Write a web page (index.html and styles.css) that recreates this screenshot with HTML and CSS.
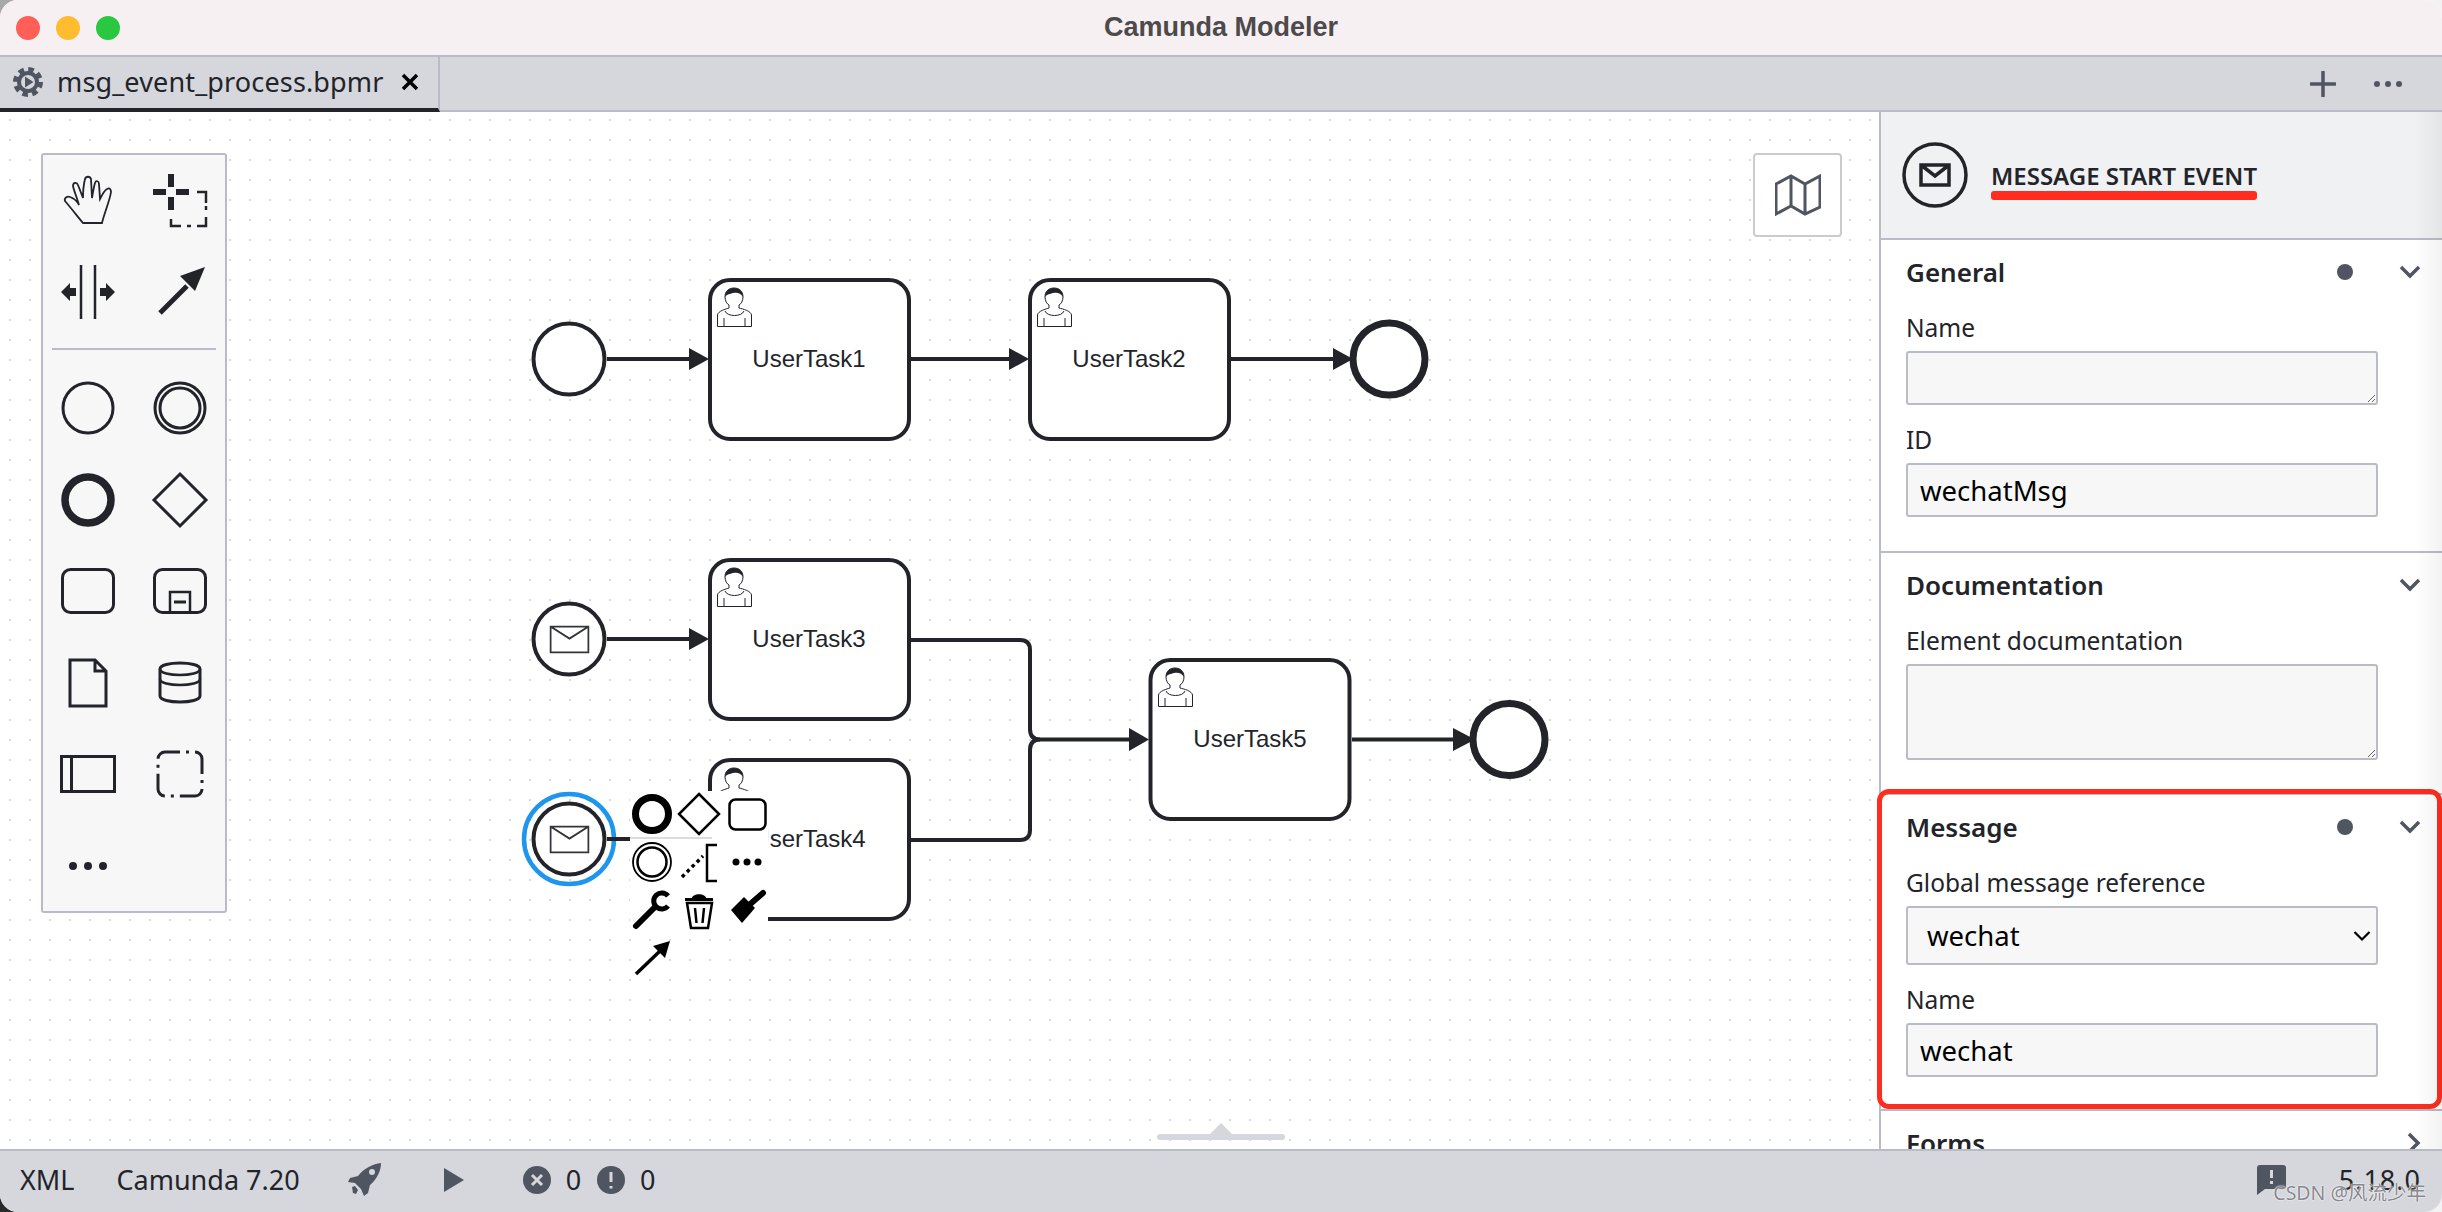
FILE: index.html
```html
<!DOCTYPE html>
<html lang="en">
<head>
  <meta charset="UTF-8">
  <title>Camunda Modeler</title>
  <link rel="stylesheet" href="styles.css">
</head>
<body>
  <!-- shared glyphs -->
  <svg class="defs" width="0" height="0">
    <symbol id="user" viewBox="0 0 35 40">
      <path class="thin" d="M8 10C8 4 12 1 17 1S26 4 26 10C26 14 24 17 22 18V21C26 22 34 24 34.500 28V39.500H.5V28C1 24 9 22 12 21V18C10 17 8 14 8 10Z"/>
      <path class="ink" d="M8 10C8 4 12 1 17 1S26 4 26 10C24 6 20 5 16 6C13 7 10 7 8 10Z"/>
      <path class="thin" d="M8 24C10 30 25 30 27 24M7 31V39.500M28 31V39.500"/>
    </symbol>
    <symbol id="mail" viewBox="0 0 40 28">
      <path class="env" d="M1 1H39V27H1ZM1 1L20 13L39 1"/>
    </symbol>
  </svg>

  <div class="window">
    <header class="titlebar">
      <div class="lights">
        <span class="light red"></span>
        <span class="light amber"></span>
        <span class="light green"></span>
      </div>
      <span class="app-title">Camunda Modeler</span>
    </header>

    <nav class="tabs">
      <div class="tab">
        <svg class="tab-gear" width="30" height="30" viewBox="0 0 30 30">
          <circle class="gear-teeth" cx="15" cy="15" r="12.500"/>
          <circle class="gear-ring" cx="15" cy="15" r="9"/>
          <path class="gear-play" d="M12 9.500L20.500 15L12 20.500Z"/>
        </svg>
        <span class="tab-name">msg_event_process.bpmr</span>
        <svg class="tab-close" width="18" height="18" viewBox="0 0 18 18">
          <path d="M2 2L16 16M16 2L2 16"/>
        </svg>
      </div>
      <div class="tab-actions">
        <svg width="26" height="26" viewBox="0 0 26 26"><path class="plus" d="M13 1V25M1 13H25"/></svg>
        <svg width="30" height="8" viewBox="0 0 30 8">
          <circle class="slate" cx="4" cy="4" r="3"/>
          <circle class="slate" cx="15" cy="4" r="3"/>
          <circle class="slate" cx="26" cy="4" r="3"/>
        </svg>
      </div>
    </nav>

    <main class="workspace">
      <section class="canvas">
        <svg class="diagram" width="1879" height="1037" viewBox="0 112 1879 1037">
          <!-- top row -->
          <circle class="shape" cx="569" cy="359" r="35.500"/>
          <path class="flow" d="M607 359H692"/>
          <path class="ink" d="M689 348L709 359L689 370Z"/>
          <rect class="shape" x="710" y="280" width="199" height="159" rx="20"/>
          <use href="#user" x="717" y="287" width="35" height="40"/>
          <text class="task-label" x="809" y="367">UserTask1</text>
          <path class="flow" d="M911 359H1012"/>
          <path class="ink" d="M1009 348L1029 359L1009 370Z"/>
          <rect class="shape" x="1030" y="280" width="199" height="159" rx="20"/>
          <use href="#user" x="1037" y="287" width="35" height="40"/>
          <text class="task-label" x="1129" y="367">UserTask2</text>
          <path class="flow" d="M1231 359H1336"/>
          <path class="ink" d="M1333 348L1353 359L1333 370Z"/>
          <circle class="end" cx="1389" cy="359" r="36"/>

          <!-- message row -->
          <circle class="shape" cx="569" cy="639" r="35.500"/>
          <use href="#mail" x="549.500" y="625.500" width="40" height="28"/>
          <path class="flow" d="M607 639H692"/>
          <path class="ink" d="M689 628L709 639L689 650Z"/>
          <rect class="shape" x="710" y="560" width="199" height="159" rx="20"/>
          <use href="#user" x="717" y="567" width="35" height="40"/>
          <text class="task-label" x="809" y="647">UserTask3</text>

          <!-- merge -->
          <path class="flow" d="M911 640H1020Q1030 640 1030 650V729Q1030 739.500 1040 739.500H1132"/>
          <path class="flow" d="M911 840H1020Q1030 840 1030 830V750Q1030 739.500 1040 739.500"/>
          <path class="ink" d="M1129 728L1149 739.500L1129 751Z"/>
          <rect class="shape" x="1150.500" y="660" width="199" height="159" rx="20"/>
          <use href="#user" x="1158" y="667" width="35" height="40"/>
          <text class="task-label" x="1250" y="747">UserTask5</text>
          <path class="flow" d="M1352 739.500H1456"/>
          <path class="ink" d="M1453 728L1475 739.500L1453 751Z"/>
          <circle class="end" cx="1509" cy="739.500" r="36"/>

          <!-- selected message start -->
          <rect class="shape" x="710" y="760" width="199" height="159" rx="20"/>
          <use href="#user" x="717" y="767" width="35" height="40"/>
          <text class="task-label" x="809" y="847">UserTask4</text>
          <circle class="selection" cx="569" cy="839" r="45"/>
          <circle class="shape" cx="569" cy="839" r="35.500"/>
          <use href="#mail" x="549.500" y="825.500" width="40" height="28"/>
          <path class="flow" d="M607 839H630"/>

          <!-- context pad -->
          <rect class="pad-bg" x="630" y="791" width="138" height="139"/>
          <path class="ghost" d="M630 838H712"/>
          <circle class="pad-thick" cx="652" cy="814" r="16.500"/>
          <path class="pad-line" d="M699 794L719 814L699 834L679 814Z"/>
          <rect class="pad-line" x="729.500" y="799.500" width="36" height="30" rx="6"/>
          <circle class="pad-thin" cx="652" cy="862" r="19"/>
          <circle class="pad-line" cx="652" cy="862" r="14.500"/>
          <path class="pad-dotted" d="M682 877L703 856"/>
          <path class="pad-line" d="M717 845H707V881H717"/>
          <circle class="pad-fill" cx="736" cy="862" r="3.500"/>
          <circle class="pad-fill" cx="747" cy="862" r="3.500"/>
          <circle class="pad-fill" cx="758" cy="862" r="3.500"/>
          <path class="pad-wrench" d="M636 926L655 907"/>
          <path class="pad-wrench-head" d="M668 896A8 8 0 1 0 668 906"/>
          <path class="pad-fill" d="M692 898C693 893 705 893 706 898H713V901H685V898Z"/>
          <path class="pad-line" d="M687 903H712L708 928H691ZM695 908L696.500 923M704 908L702.500 923"/>
          <path class="pad-fill" d="M731 910L744 897L755 908L742 923Z"/>
          <path class="pad-brush" d="M748 906L763 893"/>
          <path class="pad-arrow" d="M636 974L660 951"/>
          <path class="pad-fill" d="M670 941L653 946L665 958Z"/>
        </svg>

        <div class="palette">
          <div class="tool-grid">
            <svg class="tool" viewBox="0 0 60 60"><path class="t-hand" d="M25 53C20 47 13 38 7 31C6 28 9 26 12 27C15 28 19 31 21 35C19 28 16 21 15 16C15 12 19 12 20 15L25 28C25 20 26 13 27 9C28 6 32 6 33 9L34 28C35 22 36 16 37 13C38 10 41 11 41 14L42 29C44 25 47 20 49 19C52 17 53 20 53 22C52 30 46 44 44 53Z"/></svg>
            <svg class="tool" viewBox="0 0 60 60">
              <path class="ink" d="M18 4H24V17H18ZM18 27H24V40H18ZM3 19H16V25H3ZM26 19H39V25H26Z"/>
              <path class="t-thin" d="M47 22H56V33M56 36V40M56 47V56H47M37 56H41M21 49V56H31"/>
            </svg>
            <svg class="tool" viewBox="0 0 60 60">
              <path class="t-thin" d="M23 3V57M37 3V57"/>
              <path class="ink" d="M3 30L12 21V26H18V34H12V39ZM57 30L48 21V26H42V34H48V39Z"/>
            </svg>
            <svg class="tool" viewBox="0 0 60 60">
              <path class="t-bold" d="M10 51L37 24"/>
              <path class="ink" d="M55 5L30 14L45 29Z"/>
            </svg>
          </div>
          <div class="palette-sep"></div>
          <div class="tool-grid tight">
            <svg class="tool" viewBox="0 0 60 60"><circle class="t-line" cx="30" cy="30" r="25"/></svg>
            <svg class="tool" viewBox="0 0 60 60"><circle class="t-line" cx="30" cy="30" r="25"/><circle class="t-line" cx="30" cy="30" r="20"/></svg>
            <svg class="tool" viewBox="0 0 60 60"><circle class="t-thick" cx="30" cy="30" r="23"/></svg>
            <svg class="tool" viewBox="0 0 60 60"><path class="t-line" d="M30 4L56 30L30 56L4 30Z"/></svg>
            <svg class="tool" viewBox="0 0 60 60"><rect class="t-line" x="4.500" y="8.500" width="51" height="43" rx="8"/></svg>
            <svg class="tool" viewBox="0 0 60 60">
              <rect class="t-line" x="4.500" y="8.500" width="51" height="43" rx="8"/>
              <path class="t-thin" d="M20 51V31H40V51"/>
              <path class="t-line" d="M24 41H36"/>
            </svg>
            <svg class="tool" viewBox="0 0 60 60"><path class="t-line" d="M12 7H37L48 18V53H12ZM37 7V18H48"/></svg>
            <svg class="tool" viewBox="0 0 60 60">
              <path class="t-line" d="M10 16C10 8 50 8 50 16V43C50 51 10 51 10 43Z"/>
              <path class="t-thin" d="M10 16C10 24 50 24 50 16M10 26C10 34 50 34 50 26"/>
            </svg>
            <svg class="tool" viewBox="0 0 60 60"><path class="t-line" d="M3.500 12.500H56.500V47.500H3.500ZM13.500 12.500V47.500"/></svg>
            <svg class="tool" viewBox="0 0 60 60"><rect class="t-group" x="8" y="8" width="44" height="44" rx="7"/></svg>
            <svg class="tool" viewBox="0 0 60 60">
              <circle class="ink" cx="15" cy="30" r="4"/>
              <circle class="ink" cx="30" cy="30" r="4"/>
              <circle class="ink" cx="45" cy="30" r="4"/>
            </svg>
          </div>
        </div>

        <button class="minimap-btn">
          <svg width="46" height="42" viewBox="0 0 46 42"><path class="slate-line" d="M1 10L16 2L30 10L45 2V33L30 40L16 32L1 40ZM16 2V32M30 10V40"/></svg>
        </button>

        <div class="drawer-handle"></div>
      </section>

      <aside class="panel">
        <div class="panel-head">
          <svg class="head-icon" width="66" height="66" viewBox="0 0 66 66">
            <circle class="head-ring" cx="33" cy="33" r="31"/>
            <path class="head-mail" d="M19 23H47V43H19ZM19 23L33 34L47 23"/>
          </svg>
          <div class="head-title">
            <span>MESSAGE START EVENT</span>
            <i class="red-underline"></i>
          </div>
        </div>

        <section class="group">
          <div class="group-head">
            <h3>General</h3>
            <span class="group-dot"></span>
            <svg class="chev" width="22" height="14" viewBox="0 0 22 14"><path d="M2 2L11 11L20 2"/></svg>
          </div>
          <div class="field">
            <label>Name</label>
            <textarea class="short"></textarea>
          </div>
          <div class="field">
            <label>ID</label>
            <input type="text" value="wechatMsg">
          </div>
        </section>

        <section class="group docs">
          <div class="group-head">
            <h3>Documentation</h3>
            <svg class="chev" width="22" height="14" viewBox="0 0 22 14"><path d="M2 2L11 11L20 2"/></svg>
          </div>
          <div class="field">
            <label>Element documentation</label>
            <textarea class="tall"></textarea>
          </div>
        </section>

        <section class="group message">
          <div class="group-head">
            <h3>Message</h3>
            <span class="group-dot"></span>
            <svg class="chev" width="22" height="14" viewBox="0 0 22 14"><path d="M2 2L11 11L20 2"/></svg>
          </div>
          <div class="field">
            <label>Global message reference</label>
            <div class="select-wrap">
              <select><option>wechat</option></select>
              <svg class="select-arrow" width="18" height="12" viewBox="0 0 18 12"><path d="M1.500 2L9 9.500L16.500 2"/></svg>
            </div>
          </div>
          <div class="field">
            <label>Name</label>
            <input type="text" value="wechat">
          </div>
        </section>

        <section class="group">
          <div class="group-head">
            <h3 class="plain">Forms</h3>
            <svg class="chev" width="14" height="22" viewBox="0 0 14 22"><path d="M2 2L11 11L2 20"/></svg>
          </div>
        </section>
      </aside>

      <div class="red-box"></div>
      <div class="edge-shade"></div>
    </main>

    <footer class="statusbar">
      <span class="st-xml">XML</span>
      <span class="st-engine">Camunda 7.20</span>
      <svg class="st-rocket" width="33" height="33" viewBox="0 0 33 33">
        <path class="slate" d="M33 0C25 1 16 5 10 13L2 15L0 19L7 20L13 26L16 33L20 30L22 22C29 16 33 8 33 0Z"/>
        <path class="slate" d="M4 24L7 23L10 27L8 31L5 30Z"/>
        <circle class="st-window" cx="24" cy="9" r="3"/>
      </svg>
      <svg class="st-play" width="22" height="26" viewBox="0 0 22 26"><path class="slate" d="M1 1L21 13L1 25Z"/></svg>
      <svg class="st-badge" width="28" height="28" viewBox="0 0 28 28">
        <circle class="slate" cx="14" cy="14" r="14"/>
        <path class="st-mark" d="M9 9L19 19M19 9L9 19"/>
      </svg>
      <span class="st-count">0</span>
      <svg class="st-badge" width="28" height="28" viewBox="0 0 28 28">
        <circle class="slate" cx="14" cy="14" r="14"/>
        <path class="st-mark" d="M14 6V16M14 20V22.500"/>
      </svg>
      <span class="st-count">0</span>
      <span class="st-spacer"></span>
      <svg class="st-feedback" width="29" height="30" viewBox="0 0 29 30">
        <path class="slate" d="M3 0H26Q29 0 29 3V21Q29 24 26 24H8L0 30V3Q0 0 3 0Z"/>
        <path class="st-mark" d="M14.500 5V13M14.500 16V19"/>
      </svg>
      <span class="st-version">5.18.0</span>
      <span class="watermark">CSDN @风流少年</span>
    </footer>
  </div>
</body>
</html>
```

FILE: styles.css
```css
/* Tokens */
:root {
  --ink: #22242a;
  --slate: #505562;
  --line: #b9bcc6;
  --bar: #d5d7dc;
  --field: #f7f7f8;
  --red: #ff2d1f;
}

* {
  box-sizing: border-box;
}

html,
body {
  margin: 0;
  height: 100%;
}

body {
  overflow: hidden;
  font-family: "Noto Sans", sans-serif;
  color: var(--ink);
  background:
    linear-gradient(#a8a8a8, #a8a8a8) left top / 50% 50% no-repeat,
    linear-gradient(#2a2a2a, #2a2a2a) left bottom / 50% 50% no-repeat,
    #f2f2f2;
}

.defs {
  position: absolute;
}

.window {
  display: flex;
  flex-direction: column;
  height: 1212px;
  border-radius: 18px;
  overflow: hidden;
  background: #fff;
}

/* Title bar */
.titlebar {
  display: flex;
  align-items: center;
  justify-content: center;
  position: relative;
  flex: 0 0 57px;
  background: #f7f0f3;
  border-bottom: 2px solid var(--line);
}

.lights {
  position: absolute;
  left: 16px;
  top: 16px;
  display: flex;
  gap: 16px;
}

.light {
  width: 24px;
  height: 24px;
  border-radius: 50%;
}

.light.red { background: #ff5f57; }
.light.amber { background: #febc2e; }
.light.green { background: #2ac840; }

.app-title {
  font-family: "Liberation Sans", sans-serif;
  font-size: 27px;
  font-weight: 700;
  color: #4c4a4b;
}

/* Tabs */
.tabs {
  display: flex;
  justify-content: space-between;
  flex: 0 0 55px;
  min-height: 0;
  background: var(--bar);
  border-bottom: 2px solid var(--line);
}

.tab {
  display: flex;
  align-items: center;
  width: 440px;
  height: 55px;
  margin-bottom: -2px;
  padding: 0 0 2px 13px;
  border-right: 2px solid var(--line);
  border-bottom: 4px solid var(--ink);
}

.tab-name {
  margin-left: 14px;
  font-size: 27px;
  letter-spacing: 0.15px;
  white-space: nowrap;
}

.tab-close {
  margin-left: 17px;
  flex: none;
}

.tab-close path {
  fill: none;
  stroke: #000;
  stroke-width: 3.500;
}

.gear-teeth {
  fill: none;
  stroke: var(--slate);
  stroke-width: 5;
  stroke-dasharray: 5.500 4.300;
}

.gear-ring {
  fill: none;
  stroke: var(--slate);
  stroke-width: 4;
}

.gear-play {
  fill: var(--slate);
}

.tab-actions {
  display: flex;
  align-items: center;
  gap: 37px;
  padding: 0 39px 0 0;
}

.plus {
  fill: none;
  stroke: var(--slate);
  stroke-width: 3.500;
  stroke-linecap: round;
}

.slate { fill: var(--slate); }
.ink { fill: var(--ink); }

/* Canvas */
.workspace {
  position: relative;
  display: flex;
  flex: 0 0 1037px;
  min-height: 0;
}

.canvas {
  position: relative;
  flex: 1;
  background-color: #fff;
  background-image: radial-gradient(circle at center, #d8d8da 1px, transparent 1.500px);
  background-size: 20px 20px;
  background-position: 0 -2px;
}

.diagram {
  position: absolute;
  left: 0;
  top: 0;
}

.shape,
.end,
.flow,
.selection {
  fill: none;
  stroke: var(--ink);
}

.shape,
.flow {
  stroke-width: 4;
}

rect.shape,
circle.shape,
.end {
  fill: #fff;
}

.end {
  stroke-width: 7;
}

.selection {
  stroke: #1e96ee;
  stroke-width: 4.500;
}

.thin {
  fill: #fff;
  stroke: var(--ink);
  stroke-width: 1;
}

.env {
  fill: #fff;
  stroke: #33353b;
  stroke-width: 2;
}

.task-label {
  font-family: "Liberation Sans", sans-serif;
  font-size: 24px;
  fill: var(--ink);
  text-anchor: middle;
}

.pad-bg { fill: #fff; }
.pad-fill { fill: #000; }

.ghost {
  fill: none;
  stroke: #9a9a9e;
  stroke-width: 2;
  opacity: 0.35;
}

.pad-thick,
.pad-thin,
.pad-line,
.pad-dotted,
.pad-wrench,
.pad-wrench-head,
.pad-brush,
.pad-arrow {
  fill: none;
  stroke: #000;
}

.pad-thick { stroke-width: 7; }
.pad-thin { stroke-width: 1.800; }
.pad-line { stroke-width: 2.500; }
.pad-arrow { stroke-width: 3.500; }

.pad-dotted {
  stroke-width: 3.500;
  stroke-dasharray: 3.500 3.500;
}

.pad-wrench {
  stroke-width: 6;
  stroke-linecap: round;
}

.pad-wrench-head { stroke-width: 5; }

.pad-brush {
  stroke-width: 6;
  stroke-linecap: round;
}

/* Palette */
.palette {
  position: absolute;
  left: 41px;
  top: 41px;
  width: 186px;
  height: 760px;
  padding: 15px 15px 0;
  background: var(--field);
  border: 2px solid var(--line);
  border-radius: 3px;
}

.tool-grid {
  display: grid;
  grid-template-columns: 60px 60px;
  column-gap: 32px;
  row-gap: 32px;
}

.tool-grid.tight {
  row-gap: 31.500px;
}

.tool {
  display: block;
  width: 60px;
  height: 60px;
}

.palette-sep {
  height: 2px;
  margin: 26px -6px 28px;
  background: var(--line);
}

.t-hand,
.t-thin,
.t-line,
.t-bold,
.t-thick,
.t-group {
  fill: none;
  stroke: var(--ink);
}

.t-hand { stroke-width: 1.800; }
.t-thin { stroke-width: 2.500; }
.t-line { stroke-width: 3; }
.t-bold { stroke-width: 5; }
.t-thick { stroke-width: 7.500; }

.t-group {
  stroke-width: 3;
  stroke-dasharray: 26 6 3 6;
  stroke-dashoffset: 11;
}

.minimap-btn {
  position: absolute;
  left: 1753px;
  top: 41px;
  display: flex;
  align-items: center;
  justify-content: center;
  width: 89px;
  height: 84px;
  padding: 0;
  background: #fff;
  border: 2px solid #cbcbcb;
  border-radius: 4px;
}

.slate-line {
  fill: none;
  stroke: var(--slate);
  stroke-width: 3;
}

.drawer-handle {
  position: absolute;
  left: 1157px;
  top: 1022px;
  width: 128px;
  height: 6px;
  border-radius: 3px;
  background: var(--bar);
}

.drawer-handle::after {
  content: "";
  position: absolute;
  left: 53px;
  bottom: 6px;
  border-left: 11px solid transparent;
  border-right: 11px solid transparent;
  border-bottom: 11px solid var(--bar);
}

/* Properties panel */
.panel {
  flex: 0 0 563px;
  overflow: hidden;
  background: #fff;
  border-left: 2px solid var(--line);
}

.panel-head {
  display: flex;
  align-items: center;
  height: 128px;
  padding-left: 21px;
  background: #f0f1f3;
  border-bottom: 2px solid var(--line);
}

.head-icon {
  flex: none;
}

.head-ring,
.head-mail {
  fill: none;
  stroke: var(--ink);
  stroke-width: 3.500;
}

.head-title {
  display: flex;
  flex-direction: column;
  margin-left: 23px;
  padding-top: 11px;
  font-size: 24px;
  font-weight: 600;
  line-height: 30px;
  white-space: nowrap;
}

.red-underline {
  display: block;
  height: 9px;
  border-radius: 3px;
  background: var(--red);
}

.group {
  padding: 16px 0 34px 25px;
  border-bottom: 2px solid var(--line);
}

.group.docs {
  padding-bottom: 33px;
}

.group.message {
  padding-bottom: 32px;
}

.group-head {
  display: flex;
  align-items: center;
  height: 32px;
  padding-right: 21px;
}

.group-head h3 {
  flex: 1;
  margin: 0;
  font-size: 26px;
  font-weight: 600;
  line-height: 32px;
}

.group-dot {
  width: 16px;
  height: 16px;
  margin-right: 46px;
  border-radius: 50%;
  background: var(--slate);
}

.chev path {
  fill: none;
  stroke: var(--slate);
  stroke-width: 3.500;
}

.field {
  margin-top: 20px;
}

.group-head + .field {
  margin-top: 25px;
}

.field label {
  display: block;
  margin-bottom: 9px;
  font-size: 24.500px;
  line-height: 29px;
}

.field textarea,
.field input,
.field select {
  display: block;
  width: 472px;
  font-family: "Noto Sans", sans-serif;
  font-size: 27.500px;
  color: #000;
  background-color: var(--field);
  border: 2px solid var(--line);
  border-radius: 3px;
  outline: none;
}

.field textarea.short { height: 54px; }
.field textarea.tall { height: 96px; }

.field input {
  height: 54px;
  padding: 0 12px;
}

.select-wrap {
  position: relative;
  width: 472px;
}

.field select {
  height: 59px;
  padding: 0 19px;
  appearance: none;
}

.select-arrow {
  position: absolute;
  right: 7px;
  top: 24px;
}

.select-arrow path {
  fill: none;
  stroke: #000;
  stroke-width: 2.200;
}

/* overlays */
.red-box {
  position: absolute;
  left: 1877px;
  top: 677px;
  width: 565px;
  height: 320px;
  border: 5px solid var(--red);
  border-radius: 12px;
  pointer-events: none;
}

.edge-shade {
  position: absolute;
  right: 0;
  top: 0;
  bottom: 0;
  width: 28px;
  background: linear-gradient(to right, rgba(0, 0, 0, 0), rgba(0, 0, 0, 0.05));
  pointer-events: none;
}

/* Status bar */
.statusbar {
  position: relative;
  display: flex;
  align-items: center;
  flex: 1;
  padding: 0 21px 4px 20px;
  font-size: 27px;
  background: var(--bar);
  border-top: 2px solid var(--line);
}

.st-engine { margin-left: 42px; }
.st-rocket { margin-left: 48px; flex: none; }
.st-play { margin-left: 62px; flex: none; }
.st-badge { margin-left: 58px; flex: none; }
.st-count { margin-left: 15px; }
.st-count + .st-badge { margin-left: 16px; }
.st-spacer { flex: 1; }

.st-window {
  fill: var(--bar);
}

.st-mark {
  fill: none;
  stroke: #d5d7dc;
  stroke-width: 3;
}

.st-version {
  margin-left: 53px;
  letter-spacing: 1px;
}

.watermark {
  position: absolute;
  right: 16px;
  top: 29px;
  font-family: "Noto Sans", "Noto Sans CJK SC", sans-serif;
  font-size: 19.500px;
  line-height: 26px;
  color: rgba(120, 120, 126, 0.9);
  text-shadow: 0 0 1px #fff, 0 0 2px #fff;
  white-space: nowrap;
}
```
